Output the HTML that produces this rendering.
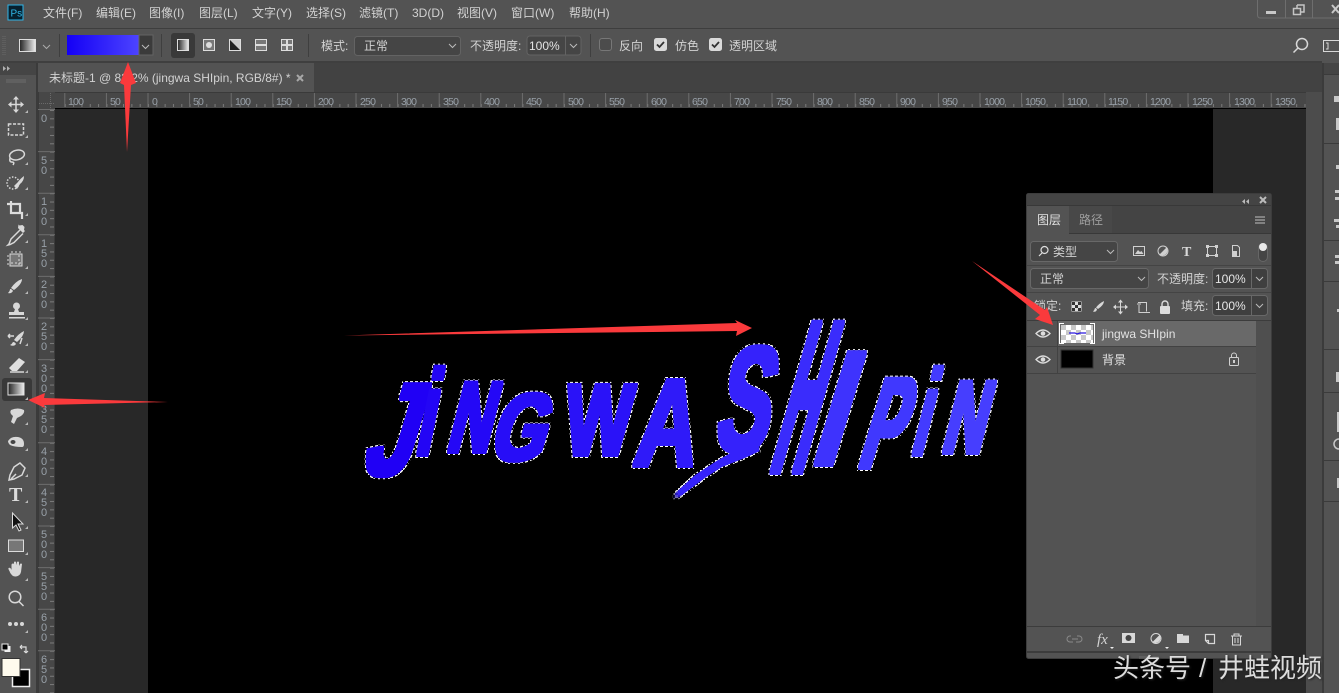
<!DOCTYPE html>
<html lang="zh"><head><meta charset="utf-8"><title>Photoshop</title>
<style>
html,body{margin:0;padding:0;width:1339px;height:693px;overflow:hidden;background:#535353}
svg{display:block;position:absolute;left:0;top:0}
text{font-family:"Liberation Sans","Noto Sans CJK SC",sans-serif;font-size:12px;fill:#d2d2d2}
.r text{font-size:10.5px;fill:#98a0a8;letter-spacing:-.8px}
.v text{font-size:11px;fill:#98a0a8;text-anchor:middle}
.l text{font-size:100px;font-weight:bold}
.i{fill:none;stroke:#d8d8d8;stroke-width:1.5}
.f{fill:#d8d8d8}
.wm{font-size:26px;fill:#dcdcdc;filter:drop-shadow(1px 1px 1px #222)}
</style></head><body>
<svg width="1339" height="693" viewBox="0 0 1339 693">
<defs>
<linearGradient id="sw"><stop offset="0" stop-color="#1400f5"/><stop offset="1" stop-color="#4d44ff"/></linearGradient>
<linearGradient id="gr"><stop offset="0" stop-color="#222"/><stop offset="1" stop-color="#eee"/></linearGradient>
<pattern id="mt" width="8.32" height="4" patternUnits="userSpaceOnUse" patternTransform="translate(148 0)"><rect width="1" height="4" fill="#7a7a7a"/></pattern>
<pattern id="ml" width="4" height="8.32" patternUnits="userSpaceOnUse" patternTransform="translate(0 110)"><rect width="4" height="1" fill="#7a7a7a"/></pattern>
<pattern id="ck" width="10" height="10" patternUnits="userSpaceOnUse" patternTransform="translate(1061 325)"><rect width="10" height="10" fill="#fff"/><rect width="5" height="5" fill="#c8c8c8"/><rect x="5" y="5" width="5" height="5" fill="#c8c8c8"/></pattern>
<filter id="ants" filterUnits="userSpaceOnUse" x="340" y="300" width="680" height="220" color-interpolation-filters="sRGB">
<feMorphology in="SourceGraphic" operator="dilate" radius="2" result="a"/>
<feMorphology in="a" operator="dilate" radius="1" result="b"/>
<feComposite in="b" in2="a" operator="out" result="ring"/>
<feFlood flood-color="#fff" x="340" y="300" width="3" height="3" result="s1"/>
<feFlood flood-color="#fff" x="343" y="303" width="2" height="2" result="s2"/>
<feMerge x="340" y="300" width="5" height="5" result="s"><feMergeNode in="s1"/><feMergeNode in="s2"/></feMerge>
<feTile in="s" x="340" y="300" width="680" height="220" result="grid"/>
<feComposite in="grid" in2="ring" operator="in" result="dash"/>
<feMerge><feMergeNode in="a"/><feMergeNode in="dash"/></feMerge>
</filter>
</defs>

<!-- base -->
<rect width="1339" height="693" fill="#535353"/>
<rect x="0" y="28" width="1339" height="1" fill="#3e3e3e"/>
<rect x="0" y="61" width="1322" height="2" fill="#3f3f3f"/>

<!-- title bar -->
<rect x="8" y="5" width="15" height="15" fill="#06202e" stroke="#2fb5e8" stroke-width="1"/>
<text x="10.5" y="16.5" style="font-size:10px;fill:#31b8ea">Ps</text>
<text x="43" y="17">文件(F)</text>
<text x="96" y="17">编辑(E)</text>
<text x="149" y="17">图像(I)</text>
<text x="199" y="17">图层(L)</text>
<text x="252" y="17">文字(Y)</text>
<text x="306" y="17">选择(S)</text>
<text x="359" y="17">滤镜(T)</text>
<text x="412" y="17">3D(D)</text>
<text x="457" y="17">视图(V)</text>
<text x="511" y="17">窗口(W)</text>
<text x="569" y="17">帮助(H)</text>
<path d="M1257.5 0v15q0 3 3 3H1339M1285.5 0v18M1312.5 0v18" fill="none" stroke="#6e6e6e"/>
<rect x="1266" y="11" width="10" height="3" fill="#c8c8c8"/>
<path d="M1297 5h7v7h-3M1297 5v3M1293.500 8.500h7v6h-7z" fill="none" stroke="#c4c4c4" stroke-width="1.500"/>
<path d="M1332 5l7 8M1339 5l-7 8" stroke="#c8c8c8" stroke-width="2"/>

<!-- options bar -->
<path d="M3 36v20M5 36v20" stroke="#6a6a6a" stroke-dasharray="1 1"/>
<rect x="19.500" y="39.500" width="16" height="12" fill="url(#gr)" stroke="#ddd"/>
<path d="M43 45l3.500 3.500 3.500-3.500" fill="none" stroke="#aaa"/>
<rect x="59" y="34" width="1" height="23" fill="#3f3f3f"/>
<rect x="67" y="35" width="72" height="20" fill="url(#sw)"/>
<rect x="139" y="35" width="14" height="20" fill="#3b3b3b" stroke="#636363"/>
<path d="M142 45l3.500 3.500 3.500-3.500" fill="none" stroke="#bbb"/>
<rect x="161" y="34" width="1" height="23" fill="#3f3f3f"/>
<rect x="171" y="33" width="24" height="25" rx="3" fill="#393939"/>
<rect x="177.500" y="39.500" width="11" height="11" fill="url(#gr)" stroke="#ddd"/>
<rect x="203.500" y="39.500" width="11" height="11" fill="#777" stroke="#ddd"/><circle cx="209" cy="45" r="3" fill="#ddd"/>
<rect x="229.500" y="39.500" width="11" height="11" fill="#ccc" stroke="#ddd"/><path d="M230 40l10 10H230z" fill="#222"/>
<rect x="255.500" y="39.500" width="11" height="11" fill="#777" stroke="#ddd"/><rect x="256" y="44" width="10" height="2" fill="#ddd"/>
<rect x="281.500" y="39.500" width="11" height="11" fill="#777" stroke="#ddd"/><path d="M287 40v10M282 45h10" stroke="#ddd" stroke-width="2"/>
<rect x="308" y="34" width="1" height="23" fill="#3f3f3f"/>
<text x="321" y="50">模式:</text>
<rect x="354.500" y="36.500" width="106" height="19" rx="3" fill="#454545" stroke="#636363"/>
<text x="364" y="50">正常</text>
<path d="M449 44l3.500 3.500 3.500-3.500" fill="none" stroke="#bbb"/>
<text x="470" y="50">不透明度:</text>
<rect x="527" y="36" width="54" height="19" rx="3" fill="#454545" stroke="#636363"/>
<rect x="565" y="36" width="1" height="19" fill="#636363"/>
<text x="529" y="50" style="fill:#e4e4e4">100%</text>
<path d="M570 44l3.500 3.500 3.500-3.500" fill="none" stroke="#bbb"/>
<rect x="590" y="34" width="1" height="23" fill="#3f3f3f"/>
<rect x="599.500" y="38.500" width="12" height="12" rx="2.500" fill="#4c4c4c" stroke="#777"/>
<text x="619" y="50">反向</text>
<rect x="654" y="38" width="13" height="13" rx="2.500" fill="#dadada"/><path d="M657 44.500l2.500 2.500 4.500-5" fill="none" stroke="#333" stroke-width="1.800"/>
<text x="675" y="50">仿色</text>
<rect x="709" y="38" width="13" height="13" rx="2.500" fill="#dadada"/><path d="M712 44.500l2.500 2.500 4.500-5" fill="none" stroke="#333" stroke-width="1.800"/>
<text x="729" y="50">透明区域</text>
<circle cx="1302" cy="44" r="5.500" class="i"/><path d="M1298 48l-4.500 4.500" class="i"/>
<rect x="1323.500" y="40.500" width="16" height="11" fill="none" stroke="#d8d8d8"/><path d="M1326 43h2v6h-2" fill="none" stroke="#d8d8d8"/>

<!-- tabs bar -->
<rect x="38" y="63" width="1284" height="29" fill="#424242"/>
<rect x="38" y="63" width="276" height="29" fill="#535353"/>
<text x="49" y="82">未标题-1 @ 83.2% (jingwa SHIpin, RGB/8#) *</text>
<path d="M297 75l6 6M303 75l-6 6" stroke="#a8a8a8" stroke-width="2"/>

<!-- canvas & pasteboard -->
<rect x="55" y="109" width="1251" height="584" fill="#282828"/>
<rect x="148" y="109" width="1065" height="584" fill="#000"/>
<rect x="55" y="108" width="1251" height="1" fill="#000"/>

<!-- right dock -->
<rect x="1306" y="92" width="16" height="601" fill="#4c4c4c"/>
<rect x="1322" y="63" width="2" height="630" fill="#3b3b3b"/>
<rect x="1324" y="63" width="15" height="630" fill="#535353"/>
<rect x="1324" y="63" width="15" height="11" fill="#454545"/>
<path d="M1324 74.500h15M1324 143.500h15M1324 240.500h15M1324 281.500h15M1324 349.500h15M1324 392.500h15M1324 460.500h15M1324 501.500h15" stroke="#3b3b3b"/>
<path d="M1334 96h5v6h-5zM1336 118h3v12h-3zM1336 165h3v4h-3zM1335 190h4v3h-4zM1335 197h4v3h-4zM1334 219h5v3h-5zM1336 225h3v3h-3zM1335 255h4v3h-4zM1335 261h4v3h-4zM1337 309h2v3h-2zM1336 372h3v10h-3zM1337 412h2v20h-2zM1337 478h2v10h-2z" fill="#c8c8c8"/>
<circle cx="1339" cy="444" r="5" fill="none" stroke="#c8c8c8" stroke-width="1.500"/>

<!-- top ruler -->
<rect x="38" y="92" width="1268" height="16" fill="#474747"/>
<rect x="38" y="92" width="1268" height="1" fill="#3a3a3a"/>
<rect x="64" y="104" width="1242" height="3" fill="url(#mt)"/>
<path d="M64.800 93v14M106.400 93v14M148 93v14M189.600 93v14M231.200 93v14M272.800 93v14M314.400 93v14M356 93v14M397.600 93v14M439.200 93v14M480.800 93v14M522.400 93v14M564 93v14M605.600 93v14M647.200 93v14M688.800 93v14M730.400 93v14M772 93v14M813.600 93v14M855.200 93v14M896.800 93v14M938.400 93v14M980 93v14M1021.600 93v14M1063.200 93v14M1104.800 93v14M1146.400 93v14M1188 93v14M1229.600 93v14M1271.200 93v14" stroke="#6e6e6e" fill="none"/>
<g class="r">
<text x="68" y="105">100</text><text x="110" y="105">50</text><text x="152" y="105">0</text><text x="193" y="105">50</text><text x="235" y="105">100</text><text x="276" y="105">150</text><text x="318" y="105">200</text><text x="360" y="105">250</text><text x="401" y="105">300</text><text x="443" y="105">350</text><text x="484" y="105">400</text><text x="526" y="105">450</text><text x="568" y="105">500</text><text x="609" y="105">550</text><text x="651" y="105">600</text><text x="692" y="105">650</text><text x="734" y="105">700</text><text x="776" y="105">750</text><text x="817" y="105">800</text><text x="859" y="105">850</text><text x="900" y="105">900</text><text x="942" y="105">950</text><text x="984" y="105">1000</text><text x="1025" y="105">1050</text><text x="1067" y="105">1100</text><text x="1108" y="105">1150</text><text x="1150" y="105">1200</text><text x="1192" y="105">1250</text><text x="1234" y="105">1300</text><text x="1275" y="105">1350</text>
</g>

<!-- left ruler -->
<rect x="38" y="92" width="17" height="601" fill="#474747"/>
<rect x="38" y="92" width="1" height="601" fill="#3a3a3a"/>
<rect x="54" y="109" width="1" height="584" fill="#3a3a3a"/>
<path d="M39 103.500h15M50.500 93v16" stroke="#6a6a6a" stroke-dasharray="1 1" fill="none"/>
<rect x="50" y="110" width="4" height="583" fill="url(#ml)"/>
<path d="M38 109.500h17M38 151.600h17M38 193.200h17M38 234.800h17M38 276.400h17M38 318h17M38 359.600h17M38 401.200h17M38 442.800h17M38 484.400h17M38 526h17M38 567.600h17M38 609.200h17M38 650.800h17" stroke="#6e6e6e" fill="none"/>
<g class="v">
<text x="44" y="122">0</text>
<text x="44 44" y="164 174">50</text>
<text x="44 44 44" y="205 215 225">100</text>
<text x="44 44 44" y="247 257 267">150</text>
<text x="44 44 44" y="288 298 308">200</text>
<text x="44 44 44" y="330 340 350">250</text>
<text x="44 44 44" y="372 382 392">300</text>
<text x="44 44 44" y="413 423 433">350</text>
<text x="44 44 44" y="455 465 475">400</text>
<text x="44 44 44" y="496 506 516">450</text>
<text x="44 44 44" y="538 548 558">500</text>
<text x="44 44 44" y="580 590 600">550</text>
<text x="44 44 44" y="621 631 641">600</text>
<text x="44 44 44" y="663 673 683">650</text>
</g>

<!-- toolbar -->
<rect x="0" y="63" width="36" height="630" fill="#535353"/>
<rect x="0" y="63" width="36" height="12" fill="#454545"/>
<rect x="36" y="63" width="2" height="630" fill="#3b3b3b"/>
<path d="M3 66l3 2.500-3 2.500zM7 66l3 2.500-3 2.500z" fill="#b0b0b0"/>
<path d="M7 79v4M9 79v4M11 79v4M13 79v4M15 79v4M17 79v4M19 79v4M21 79v4M23 79v4M25 79v4" stroke="#6c6c6c" fill="none"/>
<rect x="2" y="378" width="30" height="23" rx="3" fill="#393939"/>

<!-- move -->
<path d="M16 98v13M9.500 104.500h13" class="i"/>
<path d="M16 96l3 3.500h-6zM16 113l3-3.500h-6zM8 104.500l3.500-3v6zM24 104.500l-3.500-3v6z" class="f"/>
<!-- marquee -->
<rect x="8.500" y="124" width="15" height="11" class="i" stroke-dasharray="3 1.500"/>
<!-- lasso -->
<ellipse cx="17" cy="155" rx="7.500" ry="4.800" class="i" transform="rotate(-12 17 155)"/>
<path d="M10 158q-1 4 2 4t1 3" class="i"/>
<!-- quick select -->
<circle cx="13" cy="183" r="6" class="i" stroke-dasharray="1.500 1.500"/>
<path d="M24 176q0 5-4 8l-3 5-3-3 4-4q2-3 6-6z" class="f"/>
<!-- crop -->
<path d="M11 201v12h11v6M7 204h13v10" fill="none" stroke="#dcdcdc" stroke-width="2.200"/>
<!-- eyedropper -->
<path d="M20 230l-9 9-2 5-1 1 2-0.500 4-2 9-9" class="i"/>
<path d="M18 228l5 5 2-2-1-1 0.500-3-2-2-3 0.500-1-1z" class="f"/>
<!-- patch -->
<rect x="10" y="254" width="12" height="12" fill="#777" stroke="#d8d8d8"/>
<path d="M12 251v17M16 251v17M20 251v17M7 256h18M7 260h18M7 264h18" stroke="#d8d8d8" stroke-dasharray="2 9" fill="none"/>
<!-- brush -->
<path d="M22 279q0 5-8 11l-3-2q5-7 11-9zM10 289q2 0 3 2-2 3-5 2 2-2 2-4z" class="f"/>
<!-- stamp -->
<circle cx="16.500" cy="306" r="3.500" class="f"/>
<path d="M15 309h3l1 3h5v3H9v-3h5zM9 317h16v1.500H9z" class="f"/>
<!-- mixer -->
<path d="M24 331q0 5-7 11l-3-2q4-6 10-9zM13 342q2 0 3 2-2 3-6 1 2-1 3-3z" class="f"/>
<path d="M14 336l-6 0M8 336l2-2M8 336l2 2M22 338l-2 6" class="i" stroke-width="1"/>
<!-- eraser -->
<path d="M19 358l6 4-8 9h-5l-3-3z" fill="#e0e0e0"/>
<path d="M10 372h14" class="i" stroke-width="1"/>
<!-- gradient tool -->
<rect x="8" y="383" width="16" height="12" fill="url(#gr)" stroke="#e4e4e4"/>
<!-- smudge -->
<path d="M11 410q7-3 13 0 1 3-3 6l-4 2-3 6-3-2 2-6q-4-3-2-6z" class="f"/>
<!-- dodge -->
<path d="M8 441q3-5 10-4 6 1 6 7 0 3-2 3-8 0-12-2-2-2-2-4z" class="f"/><ellipse cx="13" cy="442" rx="2.500" ry="2" fill="#444"/>
<!-- pen -->
<path d="M20 463l5 5-3 7-8 4-5 1 1-5 4-8z" class="i"/><path d="M11 479l5-5" class="i" stroke-width="1"/>
<!-- type -->
<text x="9" y="501" style="font-family:'Liberation Serif',serif;font-size:20px;font-weight:bold;fill:#dcdcdc">T</text>
<!-- path selection -->
<path d="M12.500 513v15l3.500-3 3 6 2-1-3-6h5z" fill="#111" stroke="#dcdcdc"/>
<!-- shape -->
<rect x="8.500" y="540" width="15" height="11.500" fill="#777" stroke="#dcdcdc"/>
<!-- hand -->
<path d="M10 572q-2-3-1.500-4 2-1 3 2v-5q0-1.500 1.500-1.500t1 1.500v-3q1-1 2 0l.5 3 .5-3q1-1 2 0v4l1-2q1-1 2 0l-1 8q-1 4-5 4.500-4 .5-6.500-5z" class="f"/>
<!-- zoom -->
<circle cx="15" cy="597" r="5.800" class="i"/><path d="M19 601.500l4.500 4.500" class="i" stroke-width="2.200"/>
<!-- more -->
<circle cx="10" cy="624" r="2" class="f"/><circle cx="16" cy="624" r="2" class="f"/><circle cx="22" cy="624" r="2" class="f"/>

<!-- small triangles -->
<path d="M28 113v-3l-3 3zM28 138v-3l-3 3zM28 165v-3l-3 3zM28 190v-3l-3 3zM28 216v-3l-3 3zM28 243v-3l-3 3zM28 269v-3l-3 3zM28 294v-3l-3 3zM28 320v-3l-3 3zM28 346v-3l-3 3zM28 373v-3l-3 3zM28 400v-3l-3 3zM28 425v-3l-3 3zM28 451v-3l-3 3zM28 477v-3l-3 3zM28 503v-3l-3 3zM28 529v-3l-3 3zM28 555v-3l-3 3zM28 581v-3l-3 3zM28 633v-3l-3 3z" fill="#b8b8b8"/>

<!-- fg/bg swatches -->
<rect x="4.500" y="646" width="6" height="6" fill="#eee"/><rect x="2" y="644" width="6" height="6" fill="#000" stroke="#eee"/>
<path d="M20 647h6v6M20 647l2-2M20 647l2 2M26 653l-2-2M26 653l2-2" fill="none" stroke="#ddd" stroke-width="1.200"/>
<rect x="12.500" y="669.500" width="17" height="17" fill="#000" stroke="#eee" stroke-width="1.500"/>
<rect x="2" y="658.500" width="18" height="18" fill="#fffbee" stroke="#333"/>

<!-- artwork lettering: real text, stretched and skewed per letter; the filter adds the brush weight and selection edge -->
<g class="l" filter="url(#ants)">
<text style="fill:#2000f5" transform="translate(360 475) skewX(-16.700) scale(.88 1.320)">J</text>
<text style="fill:#2305f5" transform="translate(414 455) skewX(-11.300) scale(.60 1.220)">i</text>
<text style="fill:#2408f6" transform="translate(445 452) skewX(-14) scale(.60 1.010)">N</text>
<text style="fill:#270df7" transform="translate(487 460) skewX(-16.700) scale(.70 .950)">G</text>
<text style="fill:#2a12f8" transform="translate(562 455) skewX(-5.700) scale(.71 1.020)">W</text>
<text style="fill:#2f1af9" transform="translate(632 466) skewX(-8.500) scale(.85 1.250)">A</text>
<text style="fill:#3522fb" transform="translate(712 451) skewX(-11.300) scale(.80 1.500)">S</text>
<text style="fill:#3a2cfc" transform="translate(768 473) skewX(-15.600) scale(.50 2.200)">H</text>
<text style="fill:#3e33fd" transform="translate(808 465) skewX(-16.700) scale(1.100 1.640)">I</text>
<text style="fill:#4038fe" transform="translate(856 468) skewX(-16.700) scale(.60 1.300)">P</text>
<text style="fill:#433bfe" transform="translate(910 455) skewX(-14) scale(.50 1.220)">i</text>
<text style="fill:#463efe" transform="translate(940 453) skewX(-14) scale(.57 1.040)">N</text>
<polygon points="675,497 697,477 720,462 747,447 758,449 743,456 720,465 703,476" style="fill:#3522fb"/>
</g>

<!-- layers panel -->
<rect x="1026.500" y="193.500" width="245" height="465" rx="2" fill="#535353" stroke="#3c3c3c"/>
<rect x="1027" y="194" width="244" height="39" fill="#444"/>
<rect x="1027" y="205" width="244" height="1" fill="#383838"/>
<path d="M1245 199l-3 2.500 3 2.500zM1249 199l-3 2.500 3 2.500z" fill="#bbb"/>
<path d="M1260 197l6 6M1266 197l-6 6" stroke="#bbb" stroke-width="2"/>
<rect x="1027" y="206" width="42" height="28" fill="#535353"/>
<rect x="1069" y="206" width="43" height="27" fill="#484848"/>
<rect x="1069" y="233" width="202" height="1" fill="#383838"/>
<text x="1037" y="224" style="fill:#e2e2e2">图层</text>
<text x="1079" y="224" style="fill:#9e9e9e">路径</text>
<path d="M1255 217h10M1255 220h10M1255 223h10" stroke="#c0c0c0"/>
<!-- filter row -->
<rect x="1030.500" y="241.500" width="87" height="20" rx="3" fill="#454545" stroke="#686868"/>
<circle cx="1044.500" cy="250" r="3.500" fill="none" stroke="#ddd" stroke-width="1.200"/><path d="M1042 253l-3 3" stroke="#ddd" stroke-width="1.200"/>
<text x="1053" y="256">类型</text>
<path d="M1107 250l3.500 3.500 3.500-3.500" fill="none" stroke="#bbb"/>
<rect x="1133.500" y="246.500" width="11" height="9" fill="none" stroke="#d0d0d0"/><path d="M1135 254l3-4 2 2 1.500-1 2 3z" fill="#d0d0d0"/>
<circle cx="1163" cy="251" r="5" fill="none" stroke="#d0d0d0"/><path d="M1166.500 247.500a5 5 0 0 1-7 7z" fill="#d0d0d0"/>
<text x="1182" y="256" style="font-family:'Liberation Serif',serif;font-size:14px;font-weight:bold;fill:#d8d8d8">T</text>
<rect x="1207.500" y="246.500" width="9" height="9" fill="none" stroke="#d0d0d0"/><path d="M1206 245h3v3h-3zM1215 245h3v3h-3zM1206 254h3v3h-3zM1215 254h3v3h-3z" fill="#d0d0d0"/>
<path d="M1232.500 245.500h5l2 2v9h-7z" fill="none" stroke="#d0d0d0"/><rect x="1232" y="251" width="5" height="6" fill="#d0d0d0"/>
<rect x="1258.500" y="243.500" width="9" height="18" rx="4.500" fill="#454545" stroke="#666"/><circle cx="1263" cy="247" r="4" fill="#e8e8e8"/>
<rect x="1027" y="265" width="244" height="1" fill="#444"/>
<!-- blend row -->
<rect x="1030.500" y="268.500" width="118" height="20" rx="3" fill="#454545" stroke="#686868"/>
<text x="1040" y="283">正常</text>
<path d="M1138 277l3.500 3.500 3.500-3.500" fill="none" stroke="#bbb"/>
<text x="1157" y="283">不透明度:</text>
<rect x="1212.500" y="268.500" width="55" height="20" rx="3" fill="#3f3f3f" stroke="#686868"/>
<rect x="1251" y="269" width="1" height="19" fill="#686868"/>
<text x="1215" y="283" style="fill:#e6e6e6">100%</text>
<path d="M1256 277l3.500 3.500 3.500-3.500" fill="none" stroke="#bbb"/>
<rect x="1027" y="292" width="244" height="1" fill="#444"/>
<!-- lock row -->
<text x="1034" y="310">锁定:</text>
<rect x="1071.500" y="301.500" width="10" height="10" fill="#ddd"/><path d="M1072 302h3v3h-3zM1078 302h3v3h-3zM1075 305h3v3h-3zM1072 308h3v3h-3zM1078 308h3v3h-3z" fill="#333"/>
<path d="M1104 301q0 4-6 8l-2-1.500q3-4 8-6.500zM1095 308q1.500 0 2 1.500-1 3-4 2 1.500-1.500 2-3.500z" class="f"/>
<path d="M1120.500 301v12M1114.500 307h12" stroke="#d8d8d8"/><path d="M1120.500 299.500l2.500 3h-5zM1120.500 314.500l2.500-3h-5zM1113 307l3-2.500v5zM1128 307l-3-2.500v5z" class="f"/>
<path d="M1138 302.500h8.500v9M1139 305v7.500h11M1137 304h4" fill="none" stroke="#d0d0d0"/>
<rect x="1160" y="306" width="10" height="8" rx="1" fill="#dcdcdc"/><path d="M1162 306v-2a3 3 0 0 1 6 0v2" fill="none" stroke="#dcdcdc" stroke-width="1.400"/>
<text x="1181" y="310">填充:</text>
<rect x="1212.500" y="295.500" width="55" height="20" rx="3" fill="#3f3f3f" stroke="#686868"/>
<rect x="1251" y="296" width="1" height="19" fill="#686868"/>
<text x="1215" y="310" style="fill:#e6e6e6">100%</text>
<path d="M1256 304l3.500 3.500 3.500-3.500" fill="none" stroke="#bbb"/>
<rect x="1027" y="320" width="244" height="1" fill="#3c3c3c"/>
<!-- layer rows -->
<rect x="1058" y="321" width="198" height="25" fill="#696969"/>
<rect x="1027" y="346" width="229" height="1" fill="#424242"/>
<rect x="1027" y="373" width="229" height="1" fill="#424242"/>
<rect x="1057" y="321" width="1" height="53" fill="#424242"/>
<rect x="1256" y="321" width="15" height="306" fill="#4f4f4f"/>
<path d="M1036 333.500q7-7 14 0-7 7-14 0z" fill="none" stroke="#ddd" stroke-width="1.300"/><circle cx="1043" cy="333.500" r="2.300" fill="#ddd"/>
<path d="M1036 359.500q7-7 14 0-7 7-14 0z" fill="none" stroke="#ddd" stroke-width="1.300"/><circle cx="1043" cy="359.500" r="2.300" fill="#ddd"/>
<rect x="1061" y="325" width="32" height="18" fill="url(#ck)"/>
<path d="M1069 333h6l2 1 3-1 6 0" stroke="#2a18e0" stroke-width="1.200" fill="none"/>
<path d="M1064 323.500h-4.500v20h4.500M1090 323.500h4.500v20h-4.500" fill="none" stroke="#fff"/>
<rect x="1061" y="350" width="32" height="18" fill="#000" stroke="#333"/>
<text x="1102" y="338" style="fill:#e2e2e2">jingwa SHIpin</text>
<text x="1102" y="364" style="fill:#e2e2e2">背景</text>
<rect x="1229.500" y="357.500" width="9" height="8" rx="1" fill="none" stroke="#d0d0d0"/><path d="M1231.500 357.500v-2a2.500 2.500 0 0 1 5 0v2" fill="none" stroke="#d0d0d0"/><rect x="1233" y="360" width="2" height="3" fill="#d0d0d0"/>
<!-- panel footer -->
<rect x="1027" y="626" width="244" height="1" fill="#3c3c3c"/>
<rect x="1027" y="651" width="244" height="2" fill="#3c3c3c"/>
<path d="M1071 636h-1a2.500 2.500 0 0 0 0 6h3M1077 636h2a2.500 2.500 0 0 1 0 6h-3M1072 639h6" fill="none" stroke="#8a8a8a"/>
<text x="1097" y="644" style="font-family:'Liberation Serif',serif;font-style:italic;font-size:15px;fill:#d4d4d4">fx</text>
<path d="M1110 647h4l-2 2z" fill="#eee"/>
<rect x="1122" y="633" width="13" height="10" fill="#d8d8d8"/><circle cx="1128.500" cy="638" r="3" fill="#444"/>
<circle cx="1156" cy="638.500" r="5" fill="none" stroke="#d8d8d8"/><path d="M1159.500 635a5 5 0 0 1-7 7z" fill="#d8d8d8"/>
<path d="M1165 647h4l-2 2z" fill="#eee"/>
<path d="M1177 634h6v1.500h6v7.500h-12z" fill="#d8d8d8"/>
<path d="M1205.500 634.500h9v9h-6l-3-3zM1205.500 640.500h3v3" fill="none" stroke="#d8d8d8" stroke-width="1.200"/>
<path d="M1231 636h11M1234 636v-2h5v2M1232.500 636.500v8.500h8v-8.500M1235 638v5M1238 638v5" fill="none" stroke="#d8d8d8"/>
<path d="M1140 656v3M1142 656v3M1144 656v3M1146 656v3M1148 656v3M1150 656v3M1152 656v3M1154 656v3M1156 656v3M1158 656v3" stroke="#6c6c6c" fill="none"/>

<!-- red arrows -->
<g fill="#fa3a3c">
<polygon points="128,62 136,83 131,85 127,152 124,85 120,83"/>
<polygon points="28,400 45,393 44,398 168,402 44,405 45,408"/>
<polygon points="344,335.500 737,323 735,320 752,328 736,336 737,331"/>
<polygon points="972,261 1045,310 1047,307 1053,325 1035,319 1040,315"/>
</g>

<!-- watermark -->
<text class="wm" x="1113" y="677">头条号</text>
<text class="wm" x="1199" y="677">/</text>
<text class="wm" x="1218" y="677">井蛙视频</text>
</svg>
</body></html>
